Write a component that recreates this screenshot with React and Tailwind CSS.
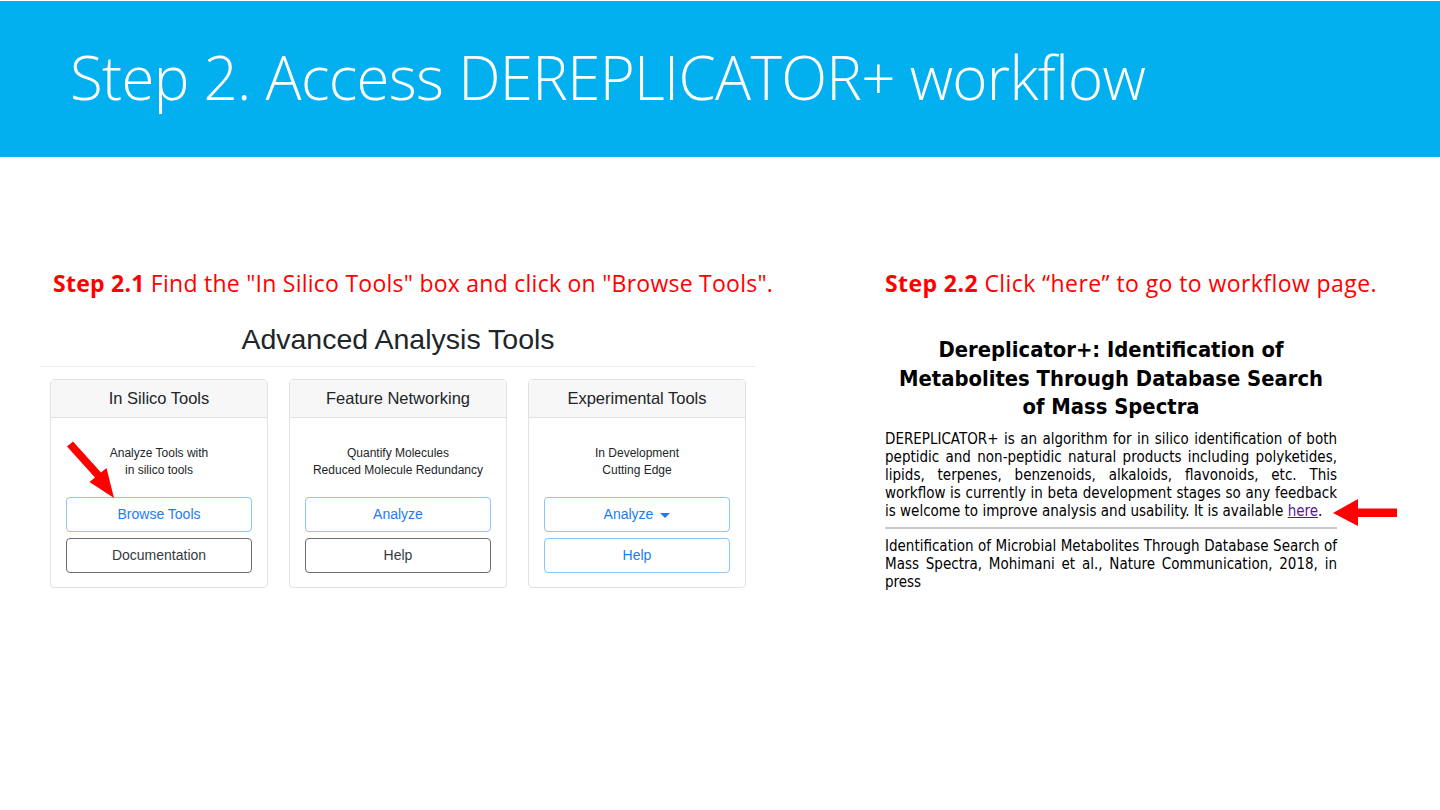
const cardFont = { fontFamily: '"Liberation Sans", Arial, sans-serif' }
const tahoma = { fontFamily: '"DejaVu Sans Condensed", "DejaVu Sans", sans-serif' }

const tools = [
  {
    title: 'In Silico Tools',
    lines: ['Analyze Tools with', 'in silico tools'],
    primary: 'Browse Tools',
    secondary: 'Documentation',
    secondaryBlue: false,
    arrow: true,
  },
  {
    title: 'Feature Networking',
    lines: ['Quantify Molecules', 'Reduced Molecule Redundancy'],
    primary: 'Analyze',
    secondary: 'Help',
    secondaryBlue: false,
  },
  {
    title: 'Experimental Tools',
    lines: ['In Development', 'Cutting Edge'],
    primary: 'Analyze',
    caret: true,
    secondary: 'Help',
    secondaryBlue: true,
  },
]

const paragraph = [
  'DEREPLICATOR+ is an algorithm for in silico identification of both',
  'peptidic and non-peptidic natural products including polyketides,',
  'lipids, terpenes, benzenoids, alkaloids, flavonoids, etc. This',
  'workflow is currently in beta development stages so any feedback',
]

const citation = [
  'Identification of Microbial Metabolites Through Database Search of',
  'Mass Spectra, Mohimani et al., Nature Communication, 2018, in',
]

function ToolCard({ tool }) {
  return (
    <div className="relative w-[218px] rounded-[4px] border border-[#e2e2e2] bg-white" style={cardFont}>
      <div className="flex h-[38px] items-center justify-center border-b border-[#e2e2e2] bg-[#f7f7f7] text-[16.5px] text-[#212529]">
        {tool.title}
      </div>
      <div className="px-[15px] pb-[14px] pt-[27px]">
        <div className="text-center text-[12px] leading-[17px] text-[#212529]">
          {tool.lines.map((line) => (
            <p key={line}>{line}</p>
          ))}
        </div>
        <div className="mt-[18px] flex h-[35px] items-center justify-center gap-[7px] rounded-[4px] border border-[#8cc3fb] text-[14px] text-[#1b7cf5]">
          {tool.primary}
          {tool.caret ? (
            <span className="mt-[1px] h-0 w-0 border-x-[5px] border-t-[5px] border-x-transparent border-t-[#1b7cf5]" />
          ) : null}
        </div>
        <div
          className={`mt-[6px] flex h-[35px] items-center justify-center rounded-[4px] border text-[14px] ${
            tool.secondaryBlue ? 'border-[#8cc3fb] text-[#1b7cf5]' : 'border-[#6c6c6c] text-[#343a40]'
          }`}
        >
          {tool.secondary}
        </div>
      </div>
      {tool.arrow ? (
        <svg className="absolute left-[14px] top-[59px]" width="52" height="60" viewBox="65 439 52 60">
          <polygon
            fill="#ff0000"
            points="73,441.5 101,472.5 106.5,468 114,498 89.5,482 95,477.5 67,446.5"
          />
        </svg>
      ) : null}
    </div>
  )
}

function JustifiedLines({ lines }) {
  return lines.map((line) => (
    <span key={line} className="block text-justify [text-align-last:justify]">
      {line}
    </span>
  ))
}

export default function App() {
  return (
    <div className="h-[810px] w-[1440px] overflow-hidden bg-white pt-px">
      <header className="flex h-[156px] items-center bg-[#02b0f0] pl-[70px]">
        <h1
          className="mb-[4px] text-[60px] font-light tracking-[-0.7px] text-white"
          style={{ fontFamily: '"Open Sans", "Noto Sans", sans-serif' }}
        >
          Step 2. Access DEREPLICATOR+ workflow
        </h1>
      </header>

      <main className="flex pt-[110px]">
        <section className="ml-[40px] w-[716px]">
          <p
            className="whitespace-nowrap pl-[13px] text-[23px] leading-[32px] tracking-[0.25px] text-[#ff0000]"
            style={{ fontFamily: '"Open Sans", sans-serif' }}
          >
            <span className="font-bold">Step 2.1</span> Find the "In Silico Tools" box and click on "Browse Tools".
          </p>
          <h2 className="mt-[24px] text-center text-[28.5px] leading-[32px] text-[#212529]" style={cardFont}>
            Advanced Analysis Tools
          </h2>
          <div className="mt-[11px] border-t border-[#ececec]" />
          <div className="mt-[12px] flex gap-[21px] pl-[10px]">
            {tools.map((tool) => (
              <ToolCard key={tool.title} tool={tool} />
            ))}
          </div>
        </section>

        <section className="ml-[129px] w-[452px]">
          <p
            className="whitespace-nowrap text-[23px] leading-[32px] tracking-[0.42px] text-[#ff0000]"
            style={{ fontFamily: '"Open Sans", sans-serif' }}
          >
            <span className="font-bold">Step 2.2</span> Click “here” to go to workflow page.
          </p>
          <h3
            className="mt-[37px] text-center text-[21.8px] font-bold leading-[28.5px] text-black"
            style={tahoma}
          >
            Dereplicator+: Identification of
            <br />
            Metabolites Through Database Search
            <br />
            of Mass Spectra
          </h3>
          <div className="relative mt-[8px] text-[15px] leading-[18px] text-black" style={tahoma}>
            <JustifiedLines lines={paragraph} />
            <span className="block">
              is welcome to improve analysis and usability. It is available{' '}
              <a className="text-[#551a8b] underline">here</a>.
            </span>
            <svg className="absolute left-[446px] top-[68px]" width="66" height="29" viewBox="1331 497 66 29">
              <polygon fill="#ff0000" points="1333,512 1358,498 1358,507.5 1397,507.5 1397,516 1358,516 1358,525" />
            </svg>
          </div>
          <div className="mt-[7px] border-t-2 border-[#c8c8c8]" />
          <div className="mt-[8px] text-[15px] leading-[18px] text-black" style={tahoma}>
            <JustifiedLines lines={citation} />
            <span className="block">press</span>
          </div>
        </section>
      </main>
    </div>
  )
}
